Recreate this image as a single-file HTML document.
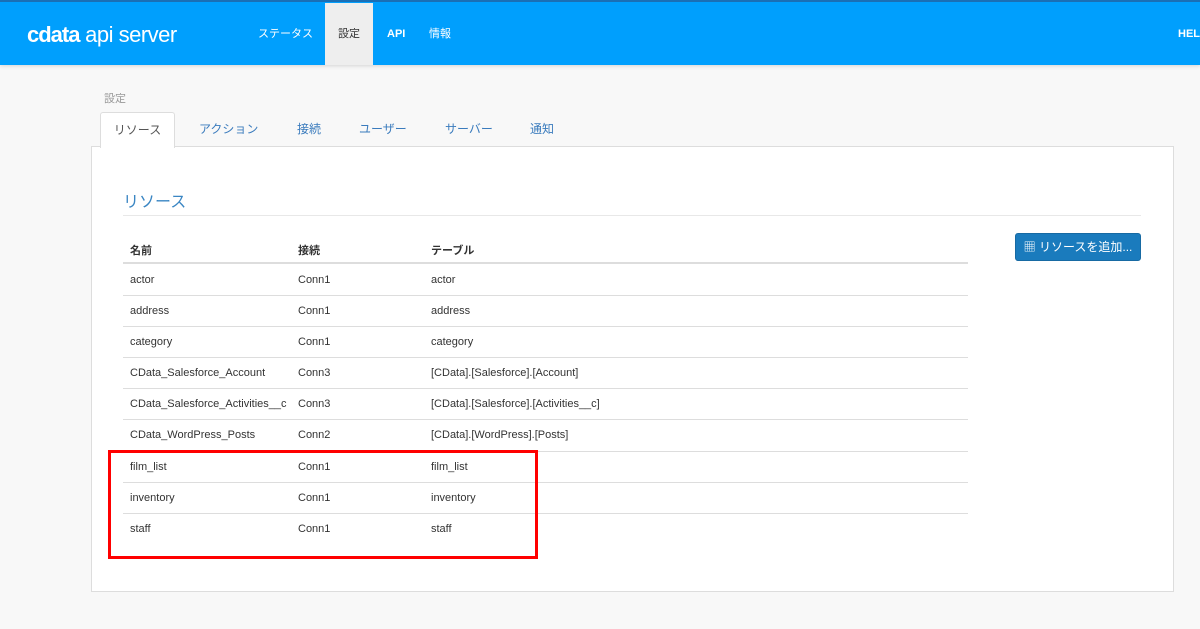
<!DOCTYPE html>
<html><head><meta charset="utf-8"><style>
*{box-sizing:border-box;margin:0;padding:0}
body{width:1200px;height:629px;background:#f8f8f8;font-family:"Liberation Sans","Noto Sans CJK JP",sans-serif;position:relative;overflow:hidden;color:#333}
.hdr{position:absolute;left:0;top:0;width:1200px;height:65px;background:#009ffd;border-top:2px solid #1a6fb5;box-shadow:0 1px 4px rgba(0,0,0,.15)}
.logo{position:absolute;left:27px;top:20px;color:#fff;font-size:22px;letter-spacing:-0.5px}
.logo b{font-weight:bold;letter-spacing:-1px}
.nav{position:absolute;top:1px;height:62px;line-height:62px;color:#fff;font-size:11px}
.act{background:#eee;color:#333;width:48px;text-align:center}
.crumb{position:absolute;left:104px;top:90px;font-size:11px;color:#999}
.tab{position:absolute;top:112px;height:35px;line-height:35px;font-size:12px;color:#3a7bbd}
.tab.on{left:100px;width:75px;background:#fff;border:1px solid #ddd;border-bottom:none;text-align:center;color:#555;border-radius:3px 3px 0 0;z-index:2;height:36px}
.panel{position:absolute;left:91px;top:146px;width:1083px;height:446px;background:#fff;border:1px solid #ddd}
h2{position:absolute;left:123px;top:188px;font-size:16px;font-weight:normal;color:#3a86c3}
.hr{position:absolute;left:123px;top:215px;width:1018px;border-top:1px solid #e8e8e8}
.row{position:absolute;left:123px;width:845px;height:31px;border-top:1px solid #ddd;font-size:11px;color:#333}
.row span{position:absolute;top:9px}
.c1{left:7px}.c2{left:175px}.c3{left:308px}
.th{border-top:none;font-weight:bold;top:233px;border-bottom:2px solid #ddd;height:31px}
.btn{position:absolute;left:1015px;top:233px;width:126px;height:28px;background:#1a7bbd;border:1px solid #176aa3;border-radius:3px;color:#fff;font-size:12px;line-height:26px;text-align:center}
.red{position:absolute;left:108px;top:450px;width:430px;height:109px;border:3px solid #f00}
</style></head><body>
<div class="hdr">
<div class="logo"><b>cdata</b> <span style="font-weight:normal">api server</span></div>
<div class="nav" style="left:258px">ステータス</div>
<div class="nav act" style="left:325px">設定</div>
<div class="nav" style="left:387px;font-weight:bold">API</div>
<div class="nav" style="left:429px">情報</div>
<div class="nav" style="left:1178px;font-weight:bold">HELP</div>
</div>
<div class="crumb">設定</div>
<div class="tab on">リソース</div>
<div class="tab" style="left:199px">アクション</div>
<div class="tab" style="left:297px">接続</div>
<div class="tab" style="left:359px">ユーザー</div>
<div class="tab" style="left:445px">サーバー</div>
<div class="tab" style="left:530px">通知</div>
<div class="panel"></div>
<h2>リソース</h2>
<div class="hr"></div>
<div class="row th"><span class="c1">名前</span><span class="c2">接続</span><span class="c3">テーブル</span></div>
<div class="row" style="top:265px;border-top:none"><span class="c1">actor</span><span class="c2">Conn1</span><span class="c3">actor</span></div>
<div class="row" style="top:295px"><span class="c1">address</span><span class="c2">Conn1</span><span class="c3">address</span></div>
<div class="row" style="top:326px"><span class="c1">category</span><span class="c2">Conn1</span><span class="c3">category</span></div>
<div class="row" style="top:357px"><span class="c1">CData_Salesforce_Account</span><span class="c2">Conn3</span><span class="c3">[CData].[Salesforce].[Account]</span></div>
<div class="row" style="top:388px"><span class="c1">CData_Salesforce_Activities__c</span><span class="c2">Conn3</span><span class="c3">[CData].[Salesforce].[Activities__c]</span></div>
<div class="row" style="top:419px"><span class="c1">CData_WordPress_Posts</span><span class="c2">Conn2</span><span class="c3">[CData].[WordPress].[Posts]</span></div>
<div class="row" style="top:451px"><span class="c1">film_list</span><span class="c2">Conn1</span><span class="c3">film_list</span></div>
<div class="row" style="top:482px"><span class="c1">inventory</span><span class="c2">Conn1</span><span class="c3">inventory</span></div>
<div class="row" style="top:513px"><span class="c1">staff</span><span class="c2">Conn1</span><span class="c3">staff</span></div>
<div class="btn">▦ リソースを追加...</div>
<div class="red"></div>
</body></html>
